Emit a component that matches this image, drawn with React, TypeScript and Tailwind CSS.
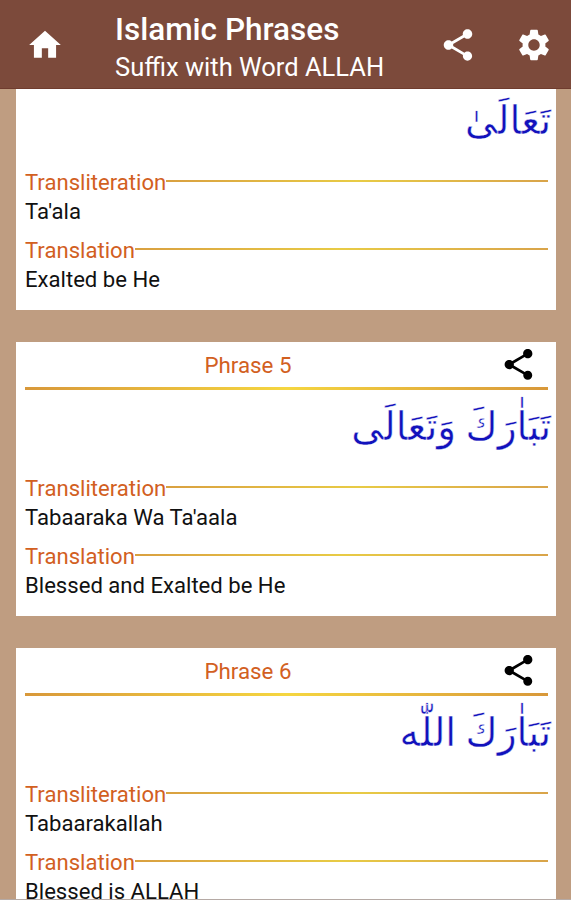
import { MdHome, MdSettings, MdShare } from "react-icons/md";

type Phrase = {
  id: number;
  arabic: string;
  transliteration: string;
  translation: string;
};

const phrases: Phrase[] = [
  {
    id: 5,
    arabic: "تَبَاٰرَكَ وَتَعَالَى",
    transliteration: "Tabaaraka Wa Ta'aala",
    translation: "Blessed and Exalted be He",
  },
  {
    id: 6,
    arabic: "تَبَاٰرَكَ اللّٰه",
    transliteration: "Tabaarakallah",
    translation: "Blessed is ALLAH",
  },
];

function Field({ label, value }: { label: string; value: string }) {
  return (
    <div className="h-[68.4px]">
      <div className="flex h-[28px] items-center">
        <span className="text-[22.1px] leading-[27px] text-[#d2601f]">
          {label}
        </span>
        <div className="mb-[3px] h-[2px] flex-1 bg-gradient-to-r from-[#d9a040] via-[#e8cb45] to-[#d9a44a]" />
      </div>
      <p className="text-[22.1px] leading-[31px] text-[#111]">{value}</p>
    </div>
  );
}

function PhraseBody({ phrase }: { phrase: Omit<Phrase, "id"> }) {
  return (
    <>
      <p
        dir="rtl"
        lang="ar"
        className="-mr-[3px] h-[84px] whitespace-nowrap font-['DejaVu_Sans',sans-serif] text-[39px] leading-[73px] text-[#1212bc] [-webkit-text-stroke:0.4px_white] [word-spacing:-3px]"
      >
        {phrase.arabic}
      </p>
      <Field label="Transliteration" value={phrase.transliteration} />
      <Field label="Translation" value={phrase.translation} />
    </>
  );
}

function PhraseCard({ phrase }: { phrase: Phrase }) {
  return (
    <section className="h-[274px] shrink-0 bg-white pl-[9px] pr-2">
      <div className="relative flex h-[45px] items-center justify-center pr-[77px]">
        <h2 className="pt-[2px] text-[22.3px] text-[#d2601f]">
          Phrase {phrase.id}
        </h2>
        <MdShare className="absolute right-[11px] top-[4px] size-[37px] text-black" />
      </div>
      <div className="h-[3px] bg-gradient-to-r from-[#d8983a] via-[#f5d640] to-[#d8983a]" />
      <PhraseBody phrase={phrase} />
    </section>
  );
}

export default function App() {
  return (
    <main className="flex h-[900px] w-[571px] flex-col overflow-hidden bg-[#bf9d81] font-[Roboto,sans-serif]">
      <header className="flex h-[89px] shrink-0 items-center bg-[#7c4a3b] text-white shadow-[inset_0_-1px_0_#6f3c2e]">
        <MdHome className="ml-[26px] size-[38px]" />
        <div className="ml-[51px] flex-1 pt-[8px]">
          <h1 className="text-[31.5px] font-medium leading-[38px]">
            Islamic Phrases
          </h1>
          <p className="text-[25.5px] leading-[37px]">Suffix with Word ALLAH</p>
        </div>
        <MdShare className="mr-[38px] size-[38px]" />
        <MdSettings className="mr-[18px] size-[38px]" />
      </header>
      <div className="flex min-h-0 flex-1 flex-col gap-[32px] overflow-hidden pl-4 pr-[15px]">
        <section className="h-[221px] shrink-0 bg-white pl-[9px] pr-2">
          <div className="-mt-[5px]">
            <PhraseBody
              phrase={{
                arabic: "تَعَالَىٰ",
                transliteration: "Ta'ala",
                translation: "Exalted be He",
              }}
            />
          </div>
        </section>
        {phrases.map((phrase) => (
          <PhraseCard key={phrase.id} phrase={phrase} />
        ))}
      </div>
      <div className="h-px shrink-0 bg-[#b5aaa5]" />
    </main>
  );
}
